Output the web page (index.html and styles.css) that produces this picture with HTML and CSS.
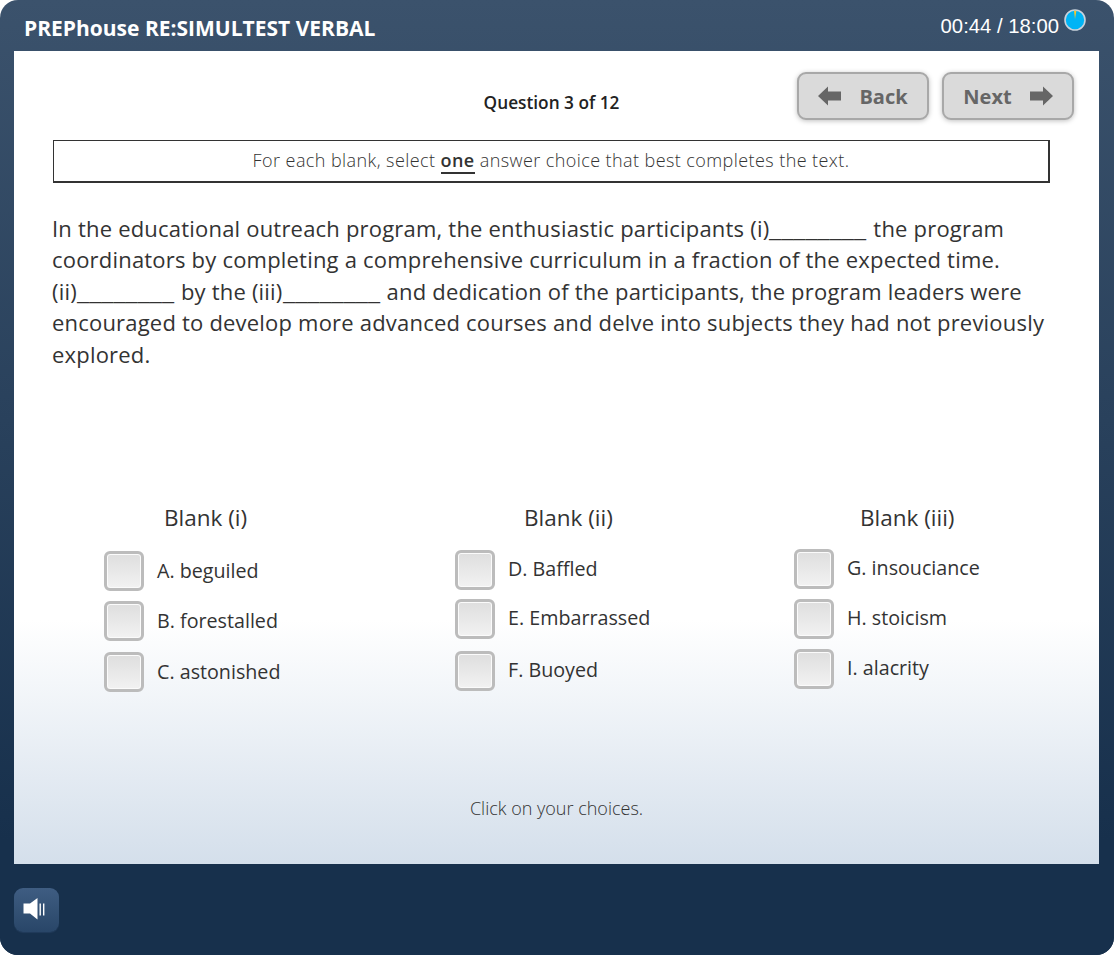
FILE: index.html
```html
<!DOCTYPE html>
<html lang="en">
<head>
  <meta charset="UTF-8">
  <title>PREPhouse RE:SIMULTEST VERBAL</title>
  <link rel="stylesheet" href="styles.css">
</head>
<body>
  <div class="test-window">
    <header class="top-bar">
      <h1 class="test-title">PREPhouse RE:SIMULTEST VERBAL</h1>
      <div class="timer">
        <span class="timer-text">00:44 / 18:00</span>
        <svg class="timer-dial" width="22" height="22" viewBox="0 0 22 22">
          <circle cx="11" cy="11" r="10" fill="#00b4f5" stroke="#c8d2dc" stroke-width="1.6"/>
          <path d="M11 10 L10 1.8 L12.4 1.8 Z" fill="#f6c62e"/>
        </svg>
      </div>
    </header>

    <main class="content">
      <div class="toolbar">
        <div class="question-count">Question 3 of 12</div>
        <div class="nav-buttons">
          <button class="nav-btn">
            <svg width="23" height="20" viewBox="0 0 23 20"><path d="M0 10 L10 0.5 V5.5 H23 V14.5 H10 V19.5 Z" fill="#666"/></svg>
            <span>Back</span>
          </button>
          <button class="nav-btn">
            <span>Next</span>
            <svg width="23" height="20" viewBox="0 0 23 20"><path d="M23 10 L13 0.5 V5.5 H0 V14.5 H13 V19.5 Z" fill="#666"/></svg>
          </button>
        </div>
      </div>

      <div class="instruction">For each blank, select <strong>one</strong> answer choice that best completes the text.</div>

      <p class="passage">In the educational outreach program, the enthusiastic participants (i)<span class="gap">________</span> the program<br>
        coordinators by completing a comprehensive curriculum in a fraction of the expected time.<br>
        (ii)<span class="gap">________</span> by the (iii)<span class="gap">________</span> and dedication of the participants, the program leaders were<br>
        encouraged to develop more advanced courses and delve into subjects they had not previously<br>
        explored.</p>

      <div class="blanks">
        <section class="blank blank-one">
          <h2 class="blank-title">Blank (i)</h2>
          <div class="choice"><span class="check"></span><span>A. beguiled</span></div>
          <div class="choice"><span class="check"></span><span>B. forestalled</span></div>
          <div class="choice"><span class="check"></span><span>C. astonished</span></div>
        </section>
        <section class="blank blank-two">
          <h2 class="blank-title">Blank (ii)</h2>
          <div class="choice"><span class="check"></span><span>D. Baffled</span></div>
          <div class="choice"><span class="check"></span><span>E. Embarrassed</span></div>
          <div class="choice"><span class="check"></span><span>F. Buoyed</span></div>
        </section>
        <section class="blank blank-three">
          <h2 class="blank-title">Blank (iii)</h2>
          <div class="choice"><span class="check"></span><span>G. insouciance</span></div>
          <div class="choice"><span class="check"></span><span>H. stoicism</span></div>
          <div class="choice"><span class="check"></span><span>I. alacrity</span></div>
        </section>
      </div>

      <div class="hint">Click on your choices.</div>
    </main>

    <footer class="bottom-bar">
      <button class="sound-btn">
        <svg width="28" height="24" viewBox="0 0 28 24">
          <path d="M0.5 5.5 H7 L14.5 0 V21.5 L7 15.5 H0.5 Z" fill="#fff"/>
          <rect x="16.5" y="5.5" width="1.4" height="12" fill="#fff"/>
          <rect x="20" y="5.5" width="1.4" height="12" fill="#fff"/>
        </svg>
      </button>
    </footer>
  </div>
</body>
</html>
```

FILE: styles.css
```css
html, body {
  margin: 0;
  padding: 0;
  background-color: #ffffff;
}

body {
  font-family: 'Open Sans', sans-serif;
  color: #333333;
}

.test-window {
  width: 1114px;
  height: 955px;
  display: flex;
  flex-direction: column;
  border-radius: 18px;
  overflow: hidden;
  background: linear-gradient(#3b526c, #17304c 88%);
}

.top-bar {
  height: 51px;
  flex: none;
  display: flex;
  justify-content: space-between;
  padding: 0 28px 0 24px;
  box-sizing: border-box;
  color: #ffffff;
}

.test-title {
  margin: 0;
  font-size: 21px;
  line-height: 57px;
  font-weight: 700;
}

.timer {
  display: flex;
  align-items: flex-start;
}

.timer-text {
  font-family: 'Liberation Sans', sans-serif;
  font-size: 20.3px;
  line-height: 53px;
}

.timer-dial {
  margin: 9px 0 0 5px;
}

.content {
  flex: none;
  height: 813px;
  margin: 0 15px 0 14px;
  padding: 0 49px 0 39px;
  box-sizing: border-box;
  background: linear-gradient(#ffffff 70%, #d4dfeb 100%);
  position: relative;
}

.toolbar {
  height: 89px;
  display: flex;
  justify-content: flex-end;
  padding-top: 21px;
  box-sizing: border-box;
}

.question-count {
  position: absolute;
  left: 0;
  width: 1075px;
  top: 40px;
  text-align: center;
  font-size: 17.25px;
  font-weight: 600;
  color: #222222;
}

.nav-buttons {
  display: flex;
  gap: 13px;
  margin-right: -24px;
}

.nav-btn {
  width: 132px;
  height: 48px;
  display: flex;
  align-items: center;
  justify-content: center;
  gap: 18px;
  background-color: #dadada;
  border: 2px solid #a8a8a8;
  border-radius: 9px;
  box-shadow: 0 1px 5px rgba(0, 0, 0, 0.25);
  font-family: 'Open Sans', sans-serif;
  font-size: 20px;
  font-weight: 700;
  color: #666666;
}

.instruction {
  height: 43px;
  box-sizing: border-box;
  border: 1px solid #333333;
  border-width: 1px 2px 2px 1px;
  text-align: center;
  font-size: 18px;
  letter-spacing: 0.42px;
  font-weight: 300;
  line-height: 39px;
}

.instruction strong {
  font-weight: 600;
  border-bottom: 2px solid #333333;
}

.passage {
  margin: 30px 0 0 -1px;
  font-size: 22px;
  letter-spacing: 0.2px;
  line-height: 31.4px;
  color: #333333;
}

/* underscores are wider in the original face, so stretch them sideways */
.gap {
  display: inline-block;
  line-height: 1;
  letter-spacing: 0;
  transform: scaleX(1.26);
  transform-origin: left;
  margin-right: 21px;
}

.blanks {
  margin-top: 130.5px;
  position: relative;
  display: grid;
  grid-template-columns: 351px 339px 1fr;
  padding-left: 51px;
}

.blank-title {
  margin: 2px 0 18px;
  font-size: 22.5px;
  font-weight: 400;
  line-height: 30px;
  padding-left: 60px;
}

.blank-two .blank-title {
  padding-left: 69px;
  margin-bottom: 17px;
}

.blank-three .blank-title {
  padding-left: 66px;
  margin-bottom: 16px;
}

.choice {
  display: flex;
  align-items: center;
  gap: 13px;
  font-size: 19.7px;
  height: 40px;
  margin-bottom: 10.5px;
}

.blank-one .choice:nth-of-type(1) {
  margin-bottom: 10px;
}

.blank-one .choice:nth-of-type(2) {
  margin-bottom: 11px;
}

.blank-two .choice:nth-of-type(1) {
  margin-bottom: 9px;
}

.blank-two .choice:nth-of-type(2) {
  margin-bottom: 12px;
}

.blank-three .choice {
  margin-bottom: 10px;
}

.blank-two .choice span:last-child,
.blank-three .choice span:last-child {
  margin-bottom: 2px;
}

.check {
  width: 40px;
  height: 40px;
  box-sizing: border-box;
  border: 3px solid #bcbcbc;
  border-radius: 6px;
  background: linear-gradient(#dedede, #f2f2f2);
  box-shadow: inset 0 0 0 1px #fbfbfb;
}

.hint {
  position: absolute;
  left: 0;
  right: 0;
  top: 745px;
  text-align: center;
  font-size: 18px;
  font-weight: 300;
}

.bottom-bar {
  flex: 1;
  padding: 24px 14px 0;
  background-color: #17304c;
}

.sound-btn {
  width: 45px;
  height: 44px;
  padding: 0;
  border: none;
  border-radius: 9px;
  background: linear-gradient(#3f5d82, #294668);
  box-shadow: 0 1px 1px #223c5c;
  display: flex;
  align-items: center;
  justify-content: center;
}
```
